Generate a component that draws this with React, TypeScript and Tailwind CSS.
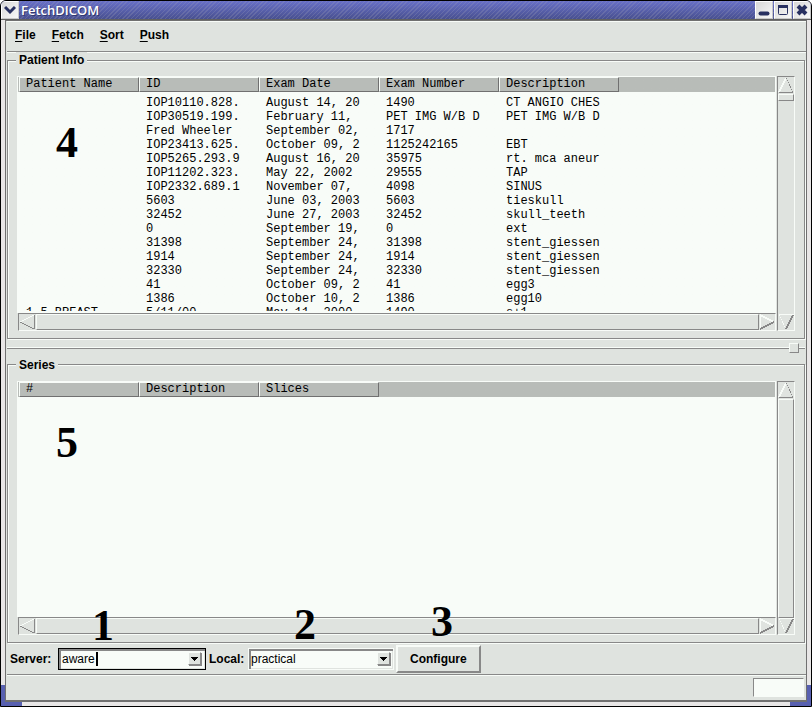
import type { ReactNode } from "react";

type Row = [string, string, string, string, string];

const patientColumns = ["Patient Name", "ID", "Exam Date", "Exam Number", "Description"];

const patients: Row[] = [
  ["", "IOP10110.828.", "August 14, 20", "1490", "CT ANGIO CHES"],
  ["", "IOP30519.199.", "February 11,", "PET IMG W/B D", "PET IMG W/B D"],
  ["", "Fred Wheeler", "September 02,", "1717", ""],
  ["", "IOP23413.625.", "October 09, 2", "1125242165", "EBT"],
  ["", "IOP5265.293.9", "August 16, 20", "35975", "rt. mca aneur"],
  ["", "IOP11202.323.", "May 22, 2002", "29555", "TAP"],
  ["", "IOP2332.689.1", "November 07,", "4098", "SINUS"],
  ["", "5603", "June 03, 2003", "5603", "tieskull"],
  ["", "32452", "June 27, 2003", "32452", "skull_teeth"],
  ["", "0", "September 19,", "0", "ext"],
  ["", "31398", "September 24,", "31398", "stent_giessen"],
  ["", "1914", "September 24,", "1914", "stent_giessen"],
  ["", "32330", "September 24,", "32330", "stent_giessen"],
  ["", "41", "October 09, 2", "41", "egg3"],
  ["", "1386", "October 10, 2", "1386", "egg10"],
  ["1.5 BREAST", "5/11/00", "May 11, 2000", "1490", "s+1"],
];

const menus = ["File", "Fetch", "Sort", "Push"];

function Arrow({ dir }: { dir: "up" | "down" | "left" | "right" }) {
  const light = "#f8fcf8";
  const dark = "#888888";
  return (
    <svg className="block size-4" viewBox="0 0 16 16" fill="none" shapeRendering="crispEdges">
      {dir === "up" && (
        <>
          <path d="M8 1L1 15" stroke={light} strokeWidth="1.5" />
          <path d="M8 1L15 15" stroke={dark} strokeDasharray="1.2 1.2" />
          <path d="M1 15.5H15" stroke={dark} />
        </>
      )}
      {dir === "down" && (
        <>
          <path d="M1 0.5H16" stroke={light} />
          <path d="M1 1L8 15" stroke={light} strokeDasharray="1.2 1.2" />
          <path d="M15 1L8 15" stroke={dark} strokeWidth="1.5" />
        </>
      )}
      {dir === "left" && (
        <>
          <path d="M1 8L15 1" stroke={light} strokeWidth="1.3" />
          <path d="M1 8L15 15" stroke={dark} />
          <path d="M15.5 1V15" stroke={dark} />
        </>
      )}
      {dir === "right" && (
        <>
          <path d="M1.5 1V15" stroke={light} />
          <path d="M1 1L15 8" stroke={light} strokeWidth="1.5" />
          <path d="M15 8L1 15" stroke={dark} strokeWidth="1.5" />
        </>
      )}
    </svg>
  );
}

function VerticalBar({ thumb }: { thumb: string }) {
  return (
    <div className="flex w-[18px] flex-col border border-t-[#888] border-r-[#f8fcf8] border-b-[#f8fcf8] border-l-[#888]">
      <button type="button" aria-label="Scroll up"><Arrow dir="up" /></button>
      <div className="flex min-h-0 flex-1 flex-col pt-px">
        <div className={`${thumb} border border-t-[#f8fcf8] border-r-[#888] border-b-[#888] border-l-[#f8fcf8]`} />
      </div>
      <button type="button" aria-label="Scroll down"><Arrow dir="down" /></button>
    </div>
  );
}

function HorizontalBar() {
  return (
    <div className="ml-px flex h-[18px] border border-t-[#888] border-r-[#f8fcf8] border-b-[#f8fcf8] border-l-[#888]">
      <button type="button" aria-label="Scroll left"><Arrow dir="left" /></button>
      <div className="ml-px flex-1 border border-t-[#f8fcf8] border-r-[#888] border-b-[#888] border-l-[#f8fcf8]" />
      <button type="button" aria-label="Scroll right"><Arrow dir="right" /></button>
    </div>
  );
}

function Group(props: { title: string; columns: string[]; rows: Row[]; thumb: string }) {
  return (
    <fieldset className="flex min-h-0 flex-1 flex-col border border-[#888] shadow-[1px_1px_0_#f8fcf8,inset_1px_1px_0_#f8fcf8]">
      <legend className="ml-2 bg-[#dfe3df] px-[3px] font-bold leading-4">{props.title}</legend>
      <div className="flex h-full min-h-0 gap-px px-[9px] pt-2 pb-[7px]">
        <div className="flex min-w-0 flex-1 flex-col">
          <div className="min-h-0 flex-1 overflow-hidden border border-b-2 border-[#f8fcf8] bg-[#f8fcf8]">
            <div className="bg-linear-to-b from-[#b8bcb8] from-[15px] to-[#f8fcf8] to-[15px] pl-px">
              <table className="table-fixed border-separate border-spacing-0 font-['Liberation_Mono',monospace]">
                <thead>
                  <tr>
                    {props.columns.map((c) => (
                      <th
                        key={c}
                        className="h-[15px] w-[120px] border border-t-[#f8fcf8] border-r-[#707070] border-b-[#707070] border-l-[#f8fcf8] bg-[#b8bcb8] py-0 pl-[6px] text-left leading-[13px] font-normal"
                      >
                        {c}
                      </th>
                    ))}
                  </tr>
                </thead>
                <tbody className="before:block before:h-1">
                  {props.rows.map((r, i) => (
                    <tr key={i}>
                      {r.map((cell, j) => (
                        <td key={j} className="h-[14px] pl-[7px] leading-[14px] whitespace-nowrap">{cell}</td>
                      ))}
                    </tr>
                  ))}
                </tbody>
              </table>
            </div>
          </div>
          <HorizontalBar />
        </div>
        <VerticalBar thumb={props.thumb} />
      </div>
    </fieldset>
  );
}

function DropArrow() {
  return (
    <span className="flex size-[13px] items-center justify-center border border-t-[#f8fcf8] border-r-[#888] border-b-[#888] border-l-[#f8fcf8] bg-[#dfe3df] shadow-[1px_1px_0_#888]">
      <svg className="h-1 w-[7px]" viewBox="0 0 7 4" shapeRendering="crispEdges"><path d="M0 0H7L3.5 4Z" /></svg>
    </span>
  );
}

function TitleButton({ label, children }: { label: string; children: ReactNode }) {
  return (
    <button type="button" aria-label={label} className="flex h-[18px] w-[18px] items-center justify-center border border-t-white border-r-[#c8c8c8] border-b-[#c8c8c8] border-l-white bg-linear-to-br from-[#d8d8d8] to-[#f8f8f8]">
      <svg className="size-3 shrink-0" viewBox="0 0 12 12" fill="none" stroke="#283060">{children}</svg>
    </button>
  );
}

const callouts = [
  { n: "4", pos: "left-[55px] top-[120px]" },
  { n: "5", pos: "left-[55px] top-[420px]" },
  { n: "1", pos: "left-[91px] top-[603px]" },
  { n: "2", pos: "left-[293px] top-[602px]" },
  { n: "3", pos: "left-[430px] top-[599px]" },
];

export default function App() {
  return (
    <div className="relative flex h-screen flex-col overflow-hidden rounded-t-md border border-black bg-[#dfe3df] font-['Liberation_Sans',Arial,sans-serif] text-xs text-black">
      <header className="flex h-[19px] shrink-0 gap-px border-b border-[#606060] bg-[repeating-linear-gradient(135deg,transparent_0_2px,#a0a0b840_2px_3px),linear-gradient(#6870c8,#485090)]">
        <TitleButton label="Window menu"><path d="M1 3L6 8L11 3" strokeWidth="3" /></TitleButton>
        <h1 className="flex-1 pl-px font-['Open_Sans',sans-serif] text-[13px] leading-[18px] font-semibold text-white [text-shadow:1px_1px_0_#303870]">FetchDICOM</h1>
        <TitleButton label="Minimize"><path d="M2.5 9.5H9.5" strokeWidth="4" strokeLinecap="round" /></TitleButton>
        <TitleButton label="Maximize"><rect x="1.5" y="1.5" width="9" height="9" rx="1" /><path d="M1 2.5H11" strokeWidth="3" /></TitleButton>
        <TitleButton label="Close"><path d="M2 2L10 10M10 2L2 10" strokeWidth="4" /></TitleButton>
      </header>

      <div className="flex min-h-0 flex-1 flex-col border-x-4 border-b-4 border-[#e8e6e6]">
        <div className="flex min-h-0 flex-1 flex-col border border-b-2 border-[#707070] pl-px">
          <nav className="flex h-[31px] shrink-0 items-center gap-4 border-t border-b border-t-[#f8fcf8] border-b-[#888] px-2 pb-[3px] shadow-[0_1px_0_#f8fcf8]">
            {menus.map((m) => (
              <button key={m} type="button" className="font-bold">
                <span className="underline underline-offset-2">{m[0]}</span>{m.slice(1)}
              </button>
            ))}
          </nav>

          <main className="flex min-h-0 flex-1 flex-col pr-px">
            <Group title="Patient Info" columns={patientColumns} rows={patients} thumb="h-[7px]" />
            <div className="flex h-[18px] shrink-0 items-center pt-px">
              <div className="h-[2px] flex-1 border-t border-b border-t-[#f8fcf8] border-b-[#888]" />
              <div className="size-[10px] border border-t-[#f8fcf8] border-r-[#888] border-b-[#888] border-l-[#f8fcf8]" />
              <div className="h-[2px] w-[6px] border-t border-b border-t-[#f8fcf8] border-b-[#888]" />
            </div>
            <Group title="Series" columns={["#", "Description", "Slices"]} rows={[]} thumb="flex-1" />
          </main>

          <form className="flex h-[31px] shrink-0 items-center pl-[3px]" onSubmit={(e) => e.preventDefault()}>
            <label htmlFor="server" className="w-12 font-bold">Server:</label>
            <div className="relative flex h-[22px] w-[148px] items-center border border-black bg-[#f8fcf8] pr-1 pl-[3px] shadow-[inset_2px_2px_0_#888,inset_-1px_-1px_0_#dfe3df]">
              <input id="server" defaultValue="aware" className="min-w-0 flex-1 bg-transparent outline-none" />
              <span className="absolute top-[3px] left-[37px] h-[14px] w-[2px] bg-black" />
              <button type="button" aria-label="Show servers"><DropArrow /></button>
            </div>
            <label htmlFor="local" className="w-[42px] pl-[3px] font-bold">Local:</label>
            <div className="relative flex h-[22px] w-[146px] items-center border border-[#f8fcf8] bg-[#f8fcf8] shadow-[inset_2px_2px_0_#888,inset_-1px_-1px_0_#dfe3df]">
              <select id="local" className="h-full w-full appearance-none bg-transparent pl-[2px] outline-none">
                <option>practical</option>
              </select>
              <span className="pointer-events-none absolute right-[3px]"><DropArrow /></span>
            </div>
            <button type="submit" className="ml-[2px] h-7 border-2 border-t-[#f8fcf8] border-r-[#888] border-b-[#888] border-l-[#f8fcf8] px-3 font-bold">Configure</button>
          </form>

          <footer className="flex h-[26px] shrink-0 items-center justify-end border-t border-[#888] pr-[2px] shadow-[inset_0_1px_0_#f8fcf8]">
            <output className="h-[19px] w-[51px] border border-t-[#888] border-r-[#f8fcf8] border-b-[#f8fcf8] border-l-[#888] bg-[#f8fcf8]" />
          </footer>
        </div>
      </div>

      {callouts.map((c) => (
        <span key={c.n} className={`${c.pos} pointer-events-none absolute font-['Liberation_Serif',serif] text-[44px] leading-none font-bold`}>{c.n}</span>
      ))}
      <span className="absolute bottom-0 left-0 h-[21px] w-[21px] border-b-4 border-l-4 border-[#5860b0]" />
      <span className="absolute right-0 bottom-0 h-[21px] w-[21px] border-r-4 border-b-4 border-[#5860b0]" />
    </div>
  );
}
